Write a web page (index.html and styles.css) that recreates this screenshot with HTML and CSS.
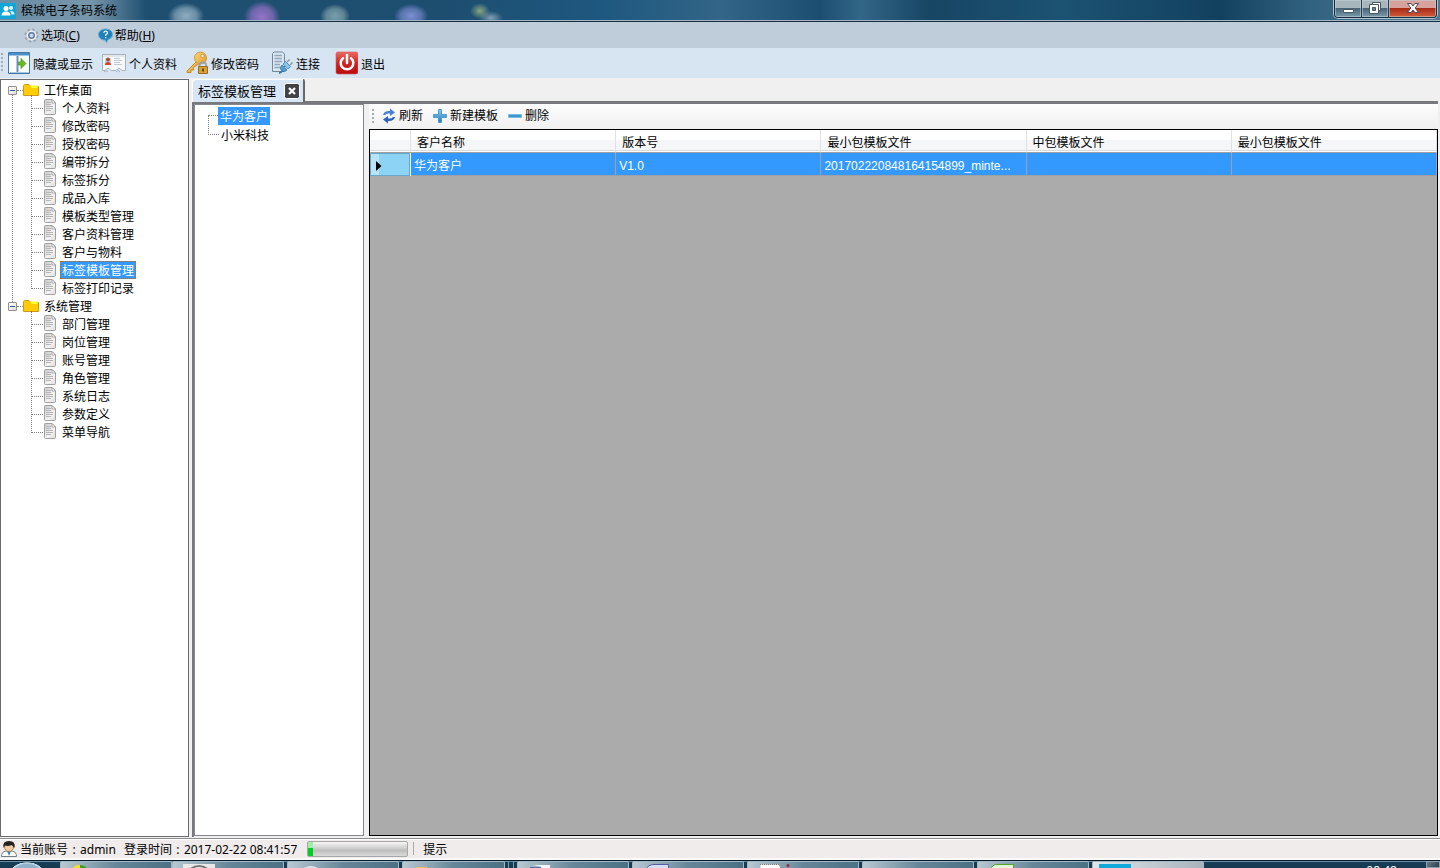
FILE: index.html
```html
<!DOCTYPE html>
<html lang="zh-CN">
<head>
<meta charset="utf-8">
<title>槟城电子条码系统</title>
<link rel="stylesheet" href="styles.css">
</head>
<body>
<svg class="defs" aria-hidden="true">
  <defs>
    <linearGradient id="paper" x2="1" y2="1"><stop offset="0" stop-color="#c8c8c8"/><stop offset=".6" stop-color="#f4f4f4"/><stop offset="1" stop-color="#dcdcdc"/></linearGradient>
    <linearGradient id="red" x2="0" y2="1"><stop offset="0" stop-color="#ea6a64"/><stop offset=".5" stop-color="#cf2420"/><stop offset="1" stop-color="#b80d0d"/></linearGradient>
    <linearGradient id="gold" x2="1" y2="1"><stop offset="0" stop-color="#ffd979"/><stop offset="1" stop-color="#e09a28"/></linearGradient>
    <linearGradient id="blue" x2="0" y2="1"><stop offset="0" stop-color="#8fcdf0"/><stop offset="1" stop-color="#2478b4"/></linearGradient>
    <symbol id="doc" viewBox="0 0 14 16">
      <path d="M1.500 1.500Q1.500 .5 2.500 .5H9L12.500 4V14.500Q12.500 15.500 11.500 15.500H2.500Q1.500 15.500 1.500 14.500Z" fill="url(#paper)" stroke="#a0a0a0"/>
      <path d="M9 .5L12.500 4H9Z" fill="#fff" stroke="#8d8d8d" stroke-width=".7"/>
      <path d="M3 3.500H8M3 5.500H8M3 7.500H10M3 9.500H10M3 11.500H8" stroke="#b4b4b4"/>
    </symbol>
    <symbol id="folder" viewBox="0 0 16 14">
      <path d="M.5 12.500V2.500L1.500 1.500H6L8 3.500H15.500V12.500Z" fill="#fc0" stroke="#cf9a10"/>
      <path d="M7 2.500H14.500V5H9Z" fill="#ff3"/>
    </symbol>
  </defs>
</svg>

<div class="app">
  <header class="titlebar">
    <svg class="app-icon" width="16" height="20" viewBox="0 0 16 20"><path fill="#12a5d8" d="M0 3H16V19H0Z"/><circle cx="6" cy="8.500" r="2.500" fill="#fff"/><path d="M1.500 15.500Q1.500 11.500 6 11.500T10.500 15.500Z" fill="#fff"/><circle cx="11" cy="8" r="2" fill="#e3f6fc"/><path d="M10 11Q14.500 10.500 14.500 14.500H11.500Q11.500 12 10 11Z" fill="#e3f6fc"/></svg>
    <h1>槟城电子条码系统</h1>
    <div class="window-buttons">
      <button class="min" aria-label="最小化"><svg width="13" height="6" viewBox="0 0 13 6"><path d="M1.500 1.500H11.500V4.500H1.500Z" fill="#fff" stroke="#4b5664"/></svg></button>
      <button class="restore" aria-label="还原"><svg width="12" height="12" viewBox="0 0 12 12"><path d="M3.500 .5H11.500V8.500H3.500Z" fill="#fff" stroke="#4b5664"/><path d="M.5 2.500H9.500V11.500H.5Z" fill="#fff" stroke="#4b5664"/><path d="M3.500 5.500H6.500V8.500H3.500Z" fill="#6c879b" stroke="#4b5664"/></svg></button>
      <button class="close" aria-label="关闭"><svg width="12" height="10" viewBox="0 0 12 10"><path d="M.5 .5H4L6 3L8 .5H11.500L8.200 5L11.500 9.500H8L6 7L4 9.500H.5L3.800 5Z" fill="#fff" stroke="#54495a"/></svg></button>
    </div>
  </header>

  <nav class="menubar">
    <button>
      <svg width="15" height="15" viewBox="0 0 15 15"><circle cx="7.500" cy="7.500" r="6" fill="none" stroke="#9aa2ad" stroke-width="2" stroke-dasharray="2.400 2.300"/><circle cx="7.500" cy="7.500" r="4" fill="#dfe4ea" stroke="#eef1f5" stroke-width="2"/><circle cx="7.500" cy="7.500" r="2.700" fill="#cfdcf0" stroke="#62799f" stroke-width="1.500"/></svg>
      <span>选项(<u>C</u>)</span>
    </button>
    <button>
      <svg width="15" height="15" viewBox="0 0 15 15"><path d="M7.500 1C11.500 1 14.500 3.200 14.500 6.300S12 11 10 11.500L8.500 14.500L7 12C3 12 .5 9.500 .5 6.500S3.500 1 7.500 1Z" fill="#2080b8" stroke="#66add3"/><path d="M5.800 4.800Q6 3.200 7.700 3.200T9.500 4.800Q9.500 6 7.700 6.800V8M7.700 9V10.300" fill="none" stroke="#e8f6ff" stroke-width="1.300"/></svg>
      <span>帮助(<u>H</u>)</span>
    </button>
  </nav>

  <div class="toolbar">
    <i class="grip"></i>
    <button>
      <svg width="22" height="22" viewBox="0 0 22 22"><path d="M.5 .5H21.500V21.500H.5Z" fill="#f5fbf5" stroke="#4379a9"/><path d="M1 1H21V3.500H1Z" fill="#4c8fc8"/><path d="M2 4H8V20H2Z" fill="#fff"/><path d="M9.500 4V21" stroke="#6c94b9" stroke-width="2"/><path d="M2 20.500H21" stroke="#a7c5dd"/><path d="M10.500 10H13V6.500L18 11.500L13 16.500V13H10.500Z" fill="#68bd1e" stroke="#438b18" stroke-width=".7"/></svg>
      <span>隐藏或显示</span>
    </button>
    <button>
      <svg width="24" height="22" viewBox="0 0 24 22"><path d="M.5 2.500H23.500V18.500H20L18 16.500H16L14 18.500H9L7 16.500H5L3 18.500H.5Z" fill="#f7f8fa" stroke="#a8b3c0"/><path d="M1 3H23V5H1Z" fill="#dfe6ec"/><path d="M3 6H9V12H3Z" fill="#b6d9ee"/><circle cx="6" cy="7.500" r="2" fill="#a94b20"/><path d="M3 13Q3 10 6 10T9 13Z" fill="#d5442d"/><path d="M12 6.500H18M12 8.500H20M12 10.500H18M12 12.500H20" stroke="#c1cbd6"/><path d="M2 20Q4 17 6 20M14 20Q16 17 18 20" fill="none" stroke="#a8b3c0"/></svg>
      <span>个人资料</span>
    </button>
    <button>
      <svg width="22" height="24" viewBox="0 0 22 24"><path d="M10.500 10.500L1 20V21.500H5V19H7.500V16.500L13 12.500" fill="url(#gold)" stroke="#c58824"/><circle cx="14.500" cy="7" r="6" fill="url(#gold)" stroke="#d09a3c"/><circle cx="16.500" cy="5" r="1.700" fill="#e5edf4" stroke="#b5761b" stroke-width=".6"/><path d="M13.500 16V14Q13.500 11.500 17 11.500T20 14V16" fill="none" stroke="#9aa0a8" stroke-width="1.800"/><path d="M12.500 15.500H21.500V22.500H12.500Z" fill="#d9a032" stroke="#997021"/><path d="M17 17.500V20.500" stroke="#6e4d13" stroke-width="2"/></svg>
      <span>修改密码</span>
    </button>
    <button class="spaced">
      <svg width="21" height="24" viewBox="0 0 21 24"><path d="M.5 2.500L2 1H10.500L12.500 3V20.500H.5Z" fill="#dce6f0" stroke="#75899d"/><path d="M2.500 4.500H10M2.500 7.500H10M2.500 10.500H10M2.500 13.500H8M2.500 16.500H8" stroke="#8fa7bd" stroke-width="1.500"/><path d="M7 22Q9 22 11 19" fill="none" stroke="#3e789f" stroke-width="2"/><path d="M10 14L15 19Q12 22 9.500 19.500T10 14Z" fill="#559ccc" stroke="#3d80b4"/><path d="M11 13L13.500 10.500L18.500 15.500L16 18Z" fill="#8fc7e9" stroke="#4f94c4"/><path d="M15 11L17.500 8.500M18 14L20.500 11.500" stroke="#8b99a5" stroke-width="1.500"/></svg>
      <span>连接</span>
    </button>
    <button class="spaced">
      <svg width="25" height="24" viewBox="0 0 25 24"><rect x="3" y="1" width="22" height="22" rx="2" fill="url(#red)" stroke="#d45b55" stroke-width=".6"/><path d="M10 7.200A6.300 6.300 0 1 0 18 7.200M14 4V12" fill="none" stroke="#fff" stroke-width="2.500" stroke-linecap="round"/></svg>
      <span>退出</span>
    </button>
  </div>

  <main class="workspace">
    <aside class="panel nav-panel">
      <ul class="tree">
        <li class="branch linked">
          <div class="row"><button class="expander" aria-label="折叠"></button><i class="dash"></i><svg width="16" height="14"><use href="#folder"/></svg><span class="label">工作桌面</span></div>
          <ul>
            <li><svg width="14" height="16"><use href="#doc"/></svg><a class="label" href="#">个人资料</a></li>
            <li><svg width="14" height="16"><use href="#doc"/></svg><a class="label" href="#">修改密码</a></li>
            <li><svg width="14" height="16"><use href="#doc"/></svg><a class="label" href="#">授权密码</a></li>
            <li><svg width="14" height="16"><use href="#doc"/></svg><a class="label" href="#">编带拆分</a></li>
            <li><svg width="14" height="16"><use href="#doc"/></svg><a class="label" href="#">标签拆分</a></li>
            <li><svg width="14" height="16"><use href="#doc"/></svg><a class="label" href="#">成品入库</a></li>
            <li><svg width="14" height="16"><use href="#doc"/></svg><a class="label" href="#">模板类型管理</a></li>
            <li><svg width="14" height="16"><use href="#doc"/></svg><a class="label" href="#">客户资料管理</a></li>
            <li><svg width="14" height="16"><use href="#doc"/></svg><a class="label" href="#">客户与物料</a></li>
            <li><svg width="14" height="16"><use href="#doc"/></svg><a class="label selected focused" href="#">标签模板管理</a></li>
            <li><svg width="14" height="16"><use href="#doc"/></svg><a class="label" href="#">标签打印记录</a></li>
          </ul>
        </li>
        <li class="branch">
          <div class="row"><button class="expander" aria-label="折叠"></button><i class="dash"></i><svg width="16" height="14"><use href="#folder"/></svg><span class="label">系统管理</span></div>
          <ul>
            <li><svg width="14" height="16"><use href="#doc"/></svg><a class="label" href="#">部门管理</a></li>
            <li><svg width="14" height="16"><use href="#doc"/></svg><a class="label" href="#">岗位管理</a></li>
            <li><svg width="14" height="16"><use href="#doc"/></svg><a class="label" href="#">账号管理</a></li>
            <li><svg width="14" height="16"><use href="#doc"/></svg><a class="label" href="#">角色管理</a></li>
            <li><svg width="14" height="16"><use href="#doc"/></svg><a class="label" href="#">系统日志</a></li>
            <li><svg width="14" height="16"><use href="#doc"/></svg><a class="label" href="#">参数定义</a></li>
            <li><svg width="14" height="16"><use href="#doc"/></svg><a class="label" href="#">菜单导航</a></li>
          </ul>
        </li>
      </ul>
    </aside>

    <section class="document">
      <div class="tabs">
        <div class="tab">
          <span>标签模板管理</span>
          <button aria-label="关闭标签"><svg width="16" height="16" viewBox="0 0 16 16"><rect x=".5" y=".5" width="15" height="15" rx="2" fill="#414346" stroke="#fff"/><path d="M5 5L11 11M11 5L5 11" stroke="#fff" stroke-width="2.200"/></svg></button>
        </div>
      </div>
      <div class="page">
        <div class="panel customers">
          <ul>
            <li><a class="label selected" href="#">华为客户</a></li>
            <li><a class="label" href="#">小米科技</a></li>
          </ul>
        </div>
        <div class="templates">
          <div class="actions">
            <i class="grip"></i>
            <button><svg width="14" height="16" viewBox="0 0 14 16"><path d="M1 7Q2 3 7 3H8V.5L13 4.500L8 8V5.500Q4 5 3 7Z" fill="#4682d7"/><path d="M13 9Q12 13 7 13H6V15.500L1 11.500L6 8V10.500Q10 11 11 9Z" fill="#2b62c1"/></svg><span>刷新</span></button>
            <button><svg width="14" height="16" viewBox="0 0 14 16"><path d="M5.500 1.500H8.500V6.500H13.500V9.500H8.500V14.500H5.500V9.500H.5V6.500H5.500Z" fill="url(#blue)" stroke="#4c9dd0"/></svg><span>新建模板</span></button>
            <button><svg width="14" height="16" viewBox="0 0 14 16"><path d="M.5 6.500H13.500V9.500H.5Z" fill="#3f95cc" stroke="#79bce3"/></svg><span>删除</span></button>
          </div>
          <div class="grid">
            <table>
              <colgroup><col class="marker-col"><col><col><col><col><col></colgroup>
              <thead><tr><th></th><th>客户名称</th><th>版本号</th><th>最小包模板文件</th><th>中包模板文件</th><th>最小包模板文件</th></tr></thead>
              <tbody><tr><th scope="row"><svg width="6" height="10" viewBox="0 0 6 10"><path d="M0 0L5.500 5L0 10Z"/></svg></th><td>华为客户</td><td>V1.0</td><td>201702220848164154899_minte...</td><td></td><td></td></tr></tbody>
            </table>
          </div>
        </div>
      </div>
    </section>
  </main>

  <footer class="statusbar">
    <svg width="18" height="18" viewBox="0 0 18 18"><path d="M1.500 16.500Q1.500 11.500 6 11H12Q16.500 11.500 16.500 16.500Z" fill="#fff" stroke="#6f7d89"/><path d="M7 11L9 16L11 11Z" fill="#2d8ac4"/><circle cx="9" cy="7" r="4.500" fill="#f3cba3" stroke="#9d6a3a" stroke-width=".7"/><path d="M3.500 8Q2 1 9 1T14.500 8Q13 7 12 5Q8 6.500 5 5.500Z" fill="#25211f"/></svg>
    <span class="account">当前账号<i class="colon">:</i>admin</span>
    <span class="login">登录时间<i class="colon">:</i>2017-02-22 08:41:57</span>
    <div class="progress" role="progressbar" aria-label="进度" aria-valuenow="5"><div class="progress-value"></div></div>
    <i class="separator"></i>
    <span>提示</span>
  </footer>

  <div class="taskbar">
    <i class="orb"></i>
    <div class="group pair">
      <button aria-label="浏览器"><svg width="18" height="6"><path d="M0 6Q4 0 9 1V6Z" fill="#f2dc2f"/><path d="M9 1Q15 1 17 6H9Z" fill="#38a33a"/></svg></button>
      <button aria-label="工具"><svg width="32" height="6"><path d="M0 0H32V6H0Z" fill="#e9e9e9"/><path d="M6 6Q16-2 26 6" fill="none" stroke="#777" stroke-width="2"/></svg></button>
    </div>
    <div class="group"><button aria-label="聊天"><svg width="22" height="6"><path d="M1 6Q11-2 21 6Z" fill="#dfe1ee"/></svg></button></div>
    <div class="group narrow"><button aria-label="文件夹"><svg width="22" height="6"><path d="M1 6V3H12L14 6Z" fill="#e5bd62"/></svg></button></div>
    <i class="divider"></i>
    <div class="group"><button aria-label="文档"><svg width="22" height="6"><path d="M3 1H20V6H0V3H12Z" fill="#f5f7fc"/><path d="M0 3H11V6H0Z" fill="#526eb3"/></svg></button></div>
    <div class="group"><button aria-label="代码"><svg width="24" height="6"><path d="M.5 6Q3 .5 9 .5H23.500V6Z" fill="#d8ddf0" stroke="#4f5fa9"/></svg></button></div>
    <div class="group"><button aria-label="记事本"><svg width="32" height="6"><path d="M0 .5H19L22 6H0Z" fill="#fff" stroke="#777" stroke-dasharray="1 1"/><circle cx="28" cy="1.500" r="1.500" fill="#922b38"/></svg></button></div>
    <div class="group"><button aria-label="窗口"></button></div>
    <div class="group"><button aria-label="表格"><svg width="24" height="6"><path d="M.5 6Q2 .5 7 .5H23.500V6Z" fill="#e7f5dc" stroke="#50aa25"/></svg></button></div>
    <div class="group"><button class="active" aria-label="槟城电子条码系统"><svg width="32" height="6"><path d="M0 0H32V6H0Z" fill="#10a9dc"/></svg></button></div>
    <time>08:48</time>
    <button class="show-desktop" aria-label="显示桌面"></button>
  </div>
</div>
</body>
</html>
```

FILE: styles.css
```css
* { box-sizing: border-box; }

body {
  margin: 0;
  font: 12px/18px "Noto Sans", "Noto Sans CJK SC", sans-serif;
  color: #000;
}

button {
  display: flex;
  align-items: center;
  padding: 0;
  border: 0;
  background: none;
  color: inherit;
  font: inherit;
}

ul { margin: 0; padding: 0; list-style: none; }
a { color: inherit; text-decoration: none; }
svg { display: block; flex: none; }
i { font-style: normal; }
.defs { position: absolute; width: 0; height: 0; }

.app {
  display: flex;
  flex-direction: column;
  height: 100vh;
  overflow: hidden;
  background: #f0f0f0;
}

/* Title bar */
.titlebar {
  display: flex;
  flex: none;
  align-items: flex-start;
  height: 22px;
  border-bottom: 1px solid #172e40;
  box-shadow: inset 0 -1px #a3b6c6;
  background:
    linear-gradient(90deg, #a9bdcb66 0, #a9bdcb99 90px, transparent 145px),
    radial-gradient(ellipse 18px 13px at 186px 16px, #a9c4d4cc, #a9c4d488 60%, transparent),
    radial-gradient(ellipse 18px 16px at 262px 17px, #9572c8, #9572c8aa 60%, transparent),
    radial-gradient(ellipse 15px 12px at 335px 16px, #a9c5c5aa, #a9c5c577 60%, transparent),
    radial-gradient(ellipse 17px 12px at 411px 16px, #7e8fd5, #7e8fd599 60%, transparent),
    radial-gradient(ellipse 10px 8px at 480px 11px, #a4bd86cc, transparent),
    radial-gradient(ellipse 12px 7px at 491px 18px, #9cb2c4cc, transparent),
    linear-gradient(90deg, #40708c 0, #1f4f70 150px, #1d4e70 450px, #1e577f 600px, #326587 720px, #1b4e70 820px, #326687 860px, #174564 930px, #1c5272 1060px, #12415f 1220px, #31627f 1310px, #52798f 1440px);
}
.titlebar h1 { margin: 2px 0 0 5px; font-size: 12px; font-weight: 400; line-height: 18px; }
.window-buttons {
  display: flex;
  height: 18px;
  margin: 0 3px 0 auto;
  border: 1px solid #152d3e;
  border-top: 0;
  border-radius: 0 0 4px 4px;
  overflow: hidden;
  box-shadow: 0 0 0 1px #b1c4d0;
}
.window-buttons button {
  justify-content: center;
  width: 27px;
  border-right: 1px solid #273d4d;
  background: linear-gradient(#a7b6bc 0 8px, #456275 8px, #7a9bab);
  box-shadow: inset 0 0 0 1px #c7d3d988;
}
.window-buttons .min { padding-top: 4px; }
.window-buttons .restore { padding-bottom: 2px; }
.window-buttons .close {
  width: 47px;
  padding-bottom: 2px;
  border: 0;
  background: linear-gradient(#d6a29b 0 8px, #a82914 8px, #d25b3d);
}

/* Menus and tools */
.menubar { display: flex; flex: none; gap: 18px; height: 26px; padding-left: 24px; background: #bfcddb; }
.menubar button { gap: 2px; }
.menubar span { padding-top: 2px; }
.toolbar { display: flex; flex: none; gap: 9px; height: 30px; background: #d7e4f2; }
.toolbar button { gap: 3px; }
.toolbar span { padding-top: 3px; }
.toolbar .spaced { margin-left: 4px; }
.grip {
  flex: none;
  width: 2px;
  background: repeating-linear-gradient(#a6adb5 0 2px, transparent 2px 4px);
}
.toolbar .grip { height: 18px; margin: 5px -4px 0 1px; }

/* Panels */
.workspace { display: flex; flex: 1; gap: 3px; min-height: 0; padding: 1px 2px 1px 0; }
.panel { border: 1px solid #696c70; background: #fff; }
.nav-panel { flex: none; width: 189px; padding-top: 1px; }

/* Navigation tree */
.label { height: 18px; padding: 1px 2px 0; line-height: 18px; white-space: nowrap; }
.selected { background: #39f; color: #fff; }
.focused { outline: 1px dotted #c96a00; outline-offset: -1px; }
.branch { position: relative; }
.linked::before {
  content: "";
  position: absolute;
  top: 9px;
  bottom: -9px;
  left: 11px;
  border-left: 1px dotted #808080;
}
.row { display: flex; align-items: center; height: 18px; padding-left: 7px; }
.row .label { margin-left: 3px; }
.expander {
  position: relative;
  justify-content: center;
  width: 9px;
  height: 9px;
  border: 1px solid #919191;
  border-radius: 1px;
  background: linear-gradient(135deg, #fff, #ddd);
}
.expander::before { content: ""; width: 5px; height: 1px; background: #30599d; }
.dash { width: 6px; border-top: 1px dotted #808080; }
.branch ul { padding-left: 30px; }
.branch ul li { position: relative; display: flex; height: 18px; padding-left: 12px; }
.branch ul li .label { margin-left: 3px; }
.branch ul li::before {
  content: "";
  position: absolute;
  top: -9px;
  left: 0;
  width: 11px;
  height: 18px;
  border: dotted #808080;
  border-width: 0 0 1px 1px;
}
.branch ul li:first-child::before { top: -4px; height: 13px; }

/* Tabbed document */
.document { display: flex; flex: 1; flex-direction: column; min-width: 0; }
.tabs { display: flex; flex: none; height: 23px; border-bottom: 1px solid #777; }
.tab {
  display: flex;
  align-items: center;
  gap: 8px;
  height: 23px;
  padding: 0 3px 0 6px;
  border: solid #66686b;
  border-width: 0 2px 0 0;
  border-radius: 3px 2px 0 0;
  background: #d7e6f5;
  box-shadow: inset 1px 1px #fff;
  font-size: 13px;
}
.page {
  display: flex;
  flex: 1;
  gap: 5px;
  min-height: 0;
  padding: 0 0 1px;
  border: solid #77797c;
  border-width: 2px 0 0 2px;
}
.customers { flex: none; width: 170px; padding: 1px 0 0 13px; border-color: #85888c; }
.customers li { display: flex; align-items: center; height: 19px; }
.customers li::before {
  content: "";
  width: 10px;
  height: 19px;
  border: dotted #808080;
  border-width: 0 0 1px 1px;
  align-self: flex-end;
  margin-bottom: 9px;
}
.customers li:first-child::before { height: 1px; border-left: 0; }
.templates { display: flex; flex: 1; flex-direction: column; min-width: 0; }
.actions {
  display: flex;
  flex: none;
  gap: 10px;
  height: 25px;
  padding: 0 0 1px 3px;
  background: linear-gradient(#fdfdfd, #f0f0f0);
}
.actions .grip { height: 15px; margin-top: 5px; margin-right: -2px; }
.actions button { gap: 3px; }

/* Data grid */
.grid { flex: 1; min-height: 0; border: 1px solid #000; background: #ababab; }
table { width: 100%; table-layout: fixed; border-collapse: separate; border-spacing: 0; }
.marker-col { width: 41px; }
th, td { height: 23px; padding: 4px 6px 0; border-right: 1px solid #a0a0a0; font-weight: 400; line-height: 18px; text-align: left; white-space: nowrap; }
thead th {
  border-color: #dfe1e4;
  border-bottom: 1px solid #a0a0a0;
  background: linear-gradient(#fff 0 10px, #f5f6f7 10px 20px, #dadbdc 20px 21px, #fff 21px);
}
tbody th {
  padding-top: 2px;
  border-color: #f5f5f5;
  background: linear-gradient(90deg, #b9e4f7 0 9px, #8dd3f5 9px);
  box-shadow: inset 0 0 0 1px #66a7cb;
}
td {
  padding: 4px 3px 0;
  border-bottom: 1px solid #a0a0a0;
  background: #39f;
  color: #fff;
  font-family: "Liberation Sans", "Noto Sans CJK SC", sans-serif;
  overflow: hidden;
}

/* Status bar */
.statusbar {
  display: flex;
  flex: none;
  align-items: center;
  height: 22px;
  border-top: 1px solid #8d8d8d;
  border-bottom: 2px solid #fafafa;
  background: #f0eceb;
  box-shadow: inset 0 1px #fff;
}
.statusbar span { padding-top: 2px; }
.account { margin: 0 8px 0 2px; }
.colon { display: inline-block; width: 12px; text-align: center; }
.progress {
  width: 101px;
  height: 16px;
  margin: 0 5px 0 10px;
  border: 1px solid #a7a7a7;
  border-radius: 2px;
  background: linear-gradient(#f6f6f6, #d3d3d3 40%, #bebebe 60%, #dadada);
}
.progress-value { width: 5%; height: 100%; background: linear-gradient(#9df0a5 0 40%, #00cd24 40%); }
.separator { width: 1px; height: 13px; margin-right: 9px; background: #aaa; }

/* Desktop task bar */
.taskbar {
  display: flex;
  flex: none;
  gap: 3px;
  height: 8px;
  overflow: hidden;
  border-top: 1px solid #071a29;
  background: linear-gradient(#6d8fa2 0 1px, #173f58 1px, #163a50);
}
.orb { flex: none; width: 57px; background: radial-gradient(ellipse 18px 11px at 27px 11px, #8db2ca 70%, #d1e4ef 85%, transparent 90%); }
.group { display: flex; flex: 0 1 112px; min-width: 0; }
.pair { flex-basis: 224px; }
.narrow { flex-basis: 103px; }
.group button {
  flex: 1;
  align-items: flex-start;
  min-width: 0;
  padding: 2px 0 0 12px;
  border: solid #a5b9c4;
  border-width: 1px 1px 0;
  border-radius: 2px 2px 0 0;
  background: linear-gradient(100deg, #b9c9d2, #668799 50%, #4b7184);
}
.pair button { padding-left: 10px; }
.group .active { padding-left: 6px; background: linear-gradient(90deg, #dfe5e9, #a7b3bc); }
.divider { flex: none; width: 6px; border: solid #7c9bad; border-width: 0 1px; }
.taskbar time { margin: 4px 26px 0 auto; color: #fff; line-height: 12px; }
.show-desktop { flex: none; width: 14px; border: 1px solid #8da0ab; background: linear-gradient(135deg, #6a7c88, #273e4d); }
```
